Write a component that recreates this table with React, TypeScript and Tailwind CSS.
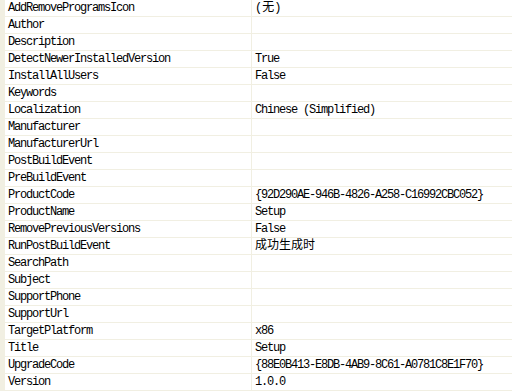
const rows: [string, string][] = [
  ['AddRemoveProgramsIcon', '(无)'],
  ['Author', ''],
  ['Description', ''],
  ['DetectNewerInstalledVersion', 'True'],
  ['InstallAllUsers', 'False'],
  ['Keywords', ''],
  ['Localization', 'Chinese (Simplified)'],
  ['Manufacturer', ''],
  ['ManufacturerUrl', ''],
  ['PostBuildEvent', ''],
  ['PreBuildEvent', ''],
  ['ProductCode', '{92D290AE-946B-4826-A258-C16992CBC052}'],
  ['ProductName', 'Setup'],
  ['RemovePreviousVersions', 'False'],
  ['RunPostBuildEvent', '成功生成时'],
  ['SearchPath', ''],
  ['Subject', ''],
  ['SupportPhone', ''],
  ['SupportUrl', ''],
  ['TargetPlatform', 'x86'],
  ['Title', 'Setup'],
  ['UpgradeCode', '{88E0B413-E8DB-4AB9-8C61-A0781C8E1F70}'],
  ['Version', '1.0.0'],
];

function Value({ text }: { text: string }) {
  // CJK glyphs are full width in the original font
  if (/[\u4e00-\u9fff]/.test(text)) {
    return <span className="tracking-normal">{text}</span>;
  }
  return <span>{text}</span>;
}

export default function App() {
  return (
    <div
      className="w-[512px] h-[391px] overflow-hidden bg-white text-black text-[12px] tracking-[-1.2px]"
      style={{ fontFamily: "'Liberation Mono', 'Noto Sans CJK SC', monospace" }}
    >
      <div className="flex flex-col">
        {rows.map(([name, value]) => (
          <div key={name} className="flex h-[17px]">
            <div className="w-[5px] shrink-0 bg-[#f1efe2]" />
            <div className="flex flex-1 border-b border-[#f1efe2]">
              <div className="w-[246px] shrink-0 pl-[3px] pt-px leading-[15px] whitespace-nowrap">{name}</div>
              <div className="w-px shrink-0 bg-[#f1efe2]" />
              <div className="flex-1 pl-[3px] pt-px leading-[15px] whitespace-nowrap">
                <Value text={value} />
              </div>
            </div>
          </div>
        ))}
      </div>
    </div>
  );
}
